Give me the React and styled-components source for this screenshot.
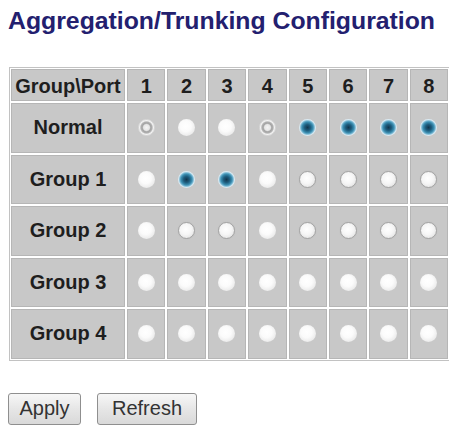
import React from "react";
import styled, { createGlobalStyle, css } from "styled-components";

const Global = createGlobalStyle`
  html, body { margin: 0; padding: 0; background: #ffffff; }
  body { margin: 8px; font-family: "Liberation Sans", Arial, sans-serif; }
`;

const Title = styled.h1`
  margin: 0;
  font-family: "Liberation Sans", Arial, sans-serif;
  font-size: 24.8px;
  line-height: 26px;
  font-weight: bold;
  color: #23206f;
  white-space: nowrap;
`;

const Grid = styled.div`
  margin: 33px 0 0 1px;
  width: 441px;
  box-sizing: border-box;
  border: 1px solid #c2c2c2;
  padding: 1px;
  background: #ffffff;
  display: grid;
  grid-template-columns: 114px repeat(8, 1fr);
  grid-template-rows: 32px repeat(5, 49.5px);
  gap: 2px;
`;

const Cell = styled.div`
  box-sizing: border-box;
  background: #c8c8c8;
  border: 1px solid #b6b6b6;
  display: flex;
  align-items: center;
  justify-content: center;
  font-family: "Liberation Sans", Arial, sans-serif;
  font-weight: bold;
  font-size: 20px;
  color: #1e1e1e;
  white-space: nowrap;
  ${(p) => p.$head && css`padding-top: 3px;`}
`;

const radioStyles = {
  checked: css`
    background: radial-gradient(circle at 50% 50%, #12364d 0, #1d5b7c 25%, #3a8db0 45%, #6fb2cf 55%, #d8eaf3 66%, #e6f0f5 82%, #a9c3d1 100%);
  `,
  plain: css`
    background: radial-gradient(circle at 45% 42%, #ffffff 0, #fbfbfb 40%, #ececec 70%, #d3d3d3 100%);
  `,
  outlined: css`
    box-sizing: border-box;
    border: 1px solid #a4a4a4;
    box-shadow: 0 0 1px #b0b0b0;
    background: radial-gradient(circle at 45% 42%, #ffffff 0, #f6f6f6 45%, #e4e4e4 80%, #cdcdcd 100%);
  `,
  ring: css`
    box-sizing: border-box;
    border: 1px solid #d8d8d8;
    background: radial-gradient(circle at 50% 50%, #f4f4f4 0, #e6e6e6 28%, #a4a4a4 40%, #b0b0b0 52%, #f3f3f3 64%, #ececec 86%, #d2d2d2 100%);
  `,
};

const Radio = styled.span`
  display: block;
  width: 17px;
  height: 17px;
  border-radius: 50%;
  ${(p) => radioStyles[p.$kind]}
`;

const Actions = styled.div`
  margin-top: 32px;
  display: flex;
  gap: 16px;
`;

const Button = styled.button`
  box-sizing: border-box;
  width: ${(p) => p.$w}px;
  height: 32px;
  padding: 0;
  border: 1px solid #8f8f8f;
  border-radius: 3px;
  background: linear-gradient(#f7f7f7, #e6e6e6 50%, #d9d9d9);
  font-family: "Liberation Sans", Arial, sans-serif;
  font-size: 20px;
  color: #333333;
`;

const rows = [
  { name: "Normal", kinds: ["ring", "plain", "plain", "ring", "checked", "checked", "checked", "checked"] },
  { name: "Group 1", kinds: ["plain", "checked", "checked", "plain", "outlined", "outlined", "outlined", "outlined"] },
  { name: "Group 2", kinds: ["plain", "outlined", "outlined", "plain", "outlined", "outlined", "outlined", "outlined"] },
  { name: "Group 3", kinds: ["plain", "plain", "plain", "plain", "plain", "plain", "plain", "plain"] },
  { name: "Group 4", kinds: ["plain", "plain", "plain", "plain", "plain", "plain", "plain", "plain"] },
];

export default function App() {
  return (
    <>
      <Global />
      <Title>Aggregation/Trunking Configuration</Title>
      <Grid>
        <Cell $head>Group\Port</Cell>
        {[1, 2, 3, 4, 5, 6, 7, 8].map((n) => (
          <Cell $head key={n}>{n}</Cell>
        ))}
        {rows.map((r) => (
          <React.Fragment key={r.name}>
            <Cell>{r.name}</Cell>
            {r.kinds.map((k, i) => (
              <Cell key={i}>
                <Radio $kind={k} />
              </Cell>
            ))}
          </React.Fragment>
        ))}
      </Grid>
      <Actions>
        <Button $w={73}>Apply</Button>
        <Button $w={100}>Refresh</Button>
      </Actions>
    </>
  );
}
